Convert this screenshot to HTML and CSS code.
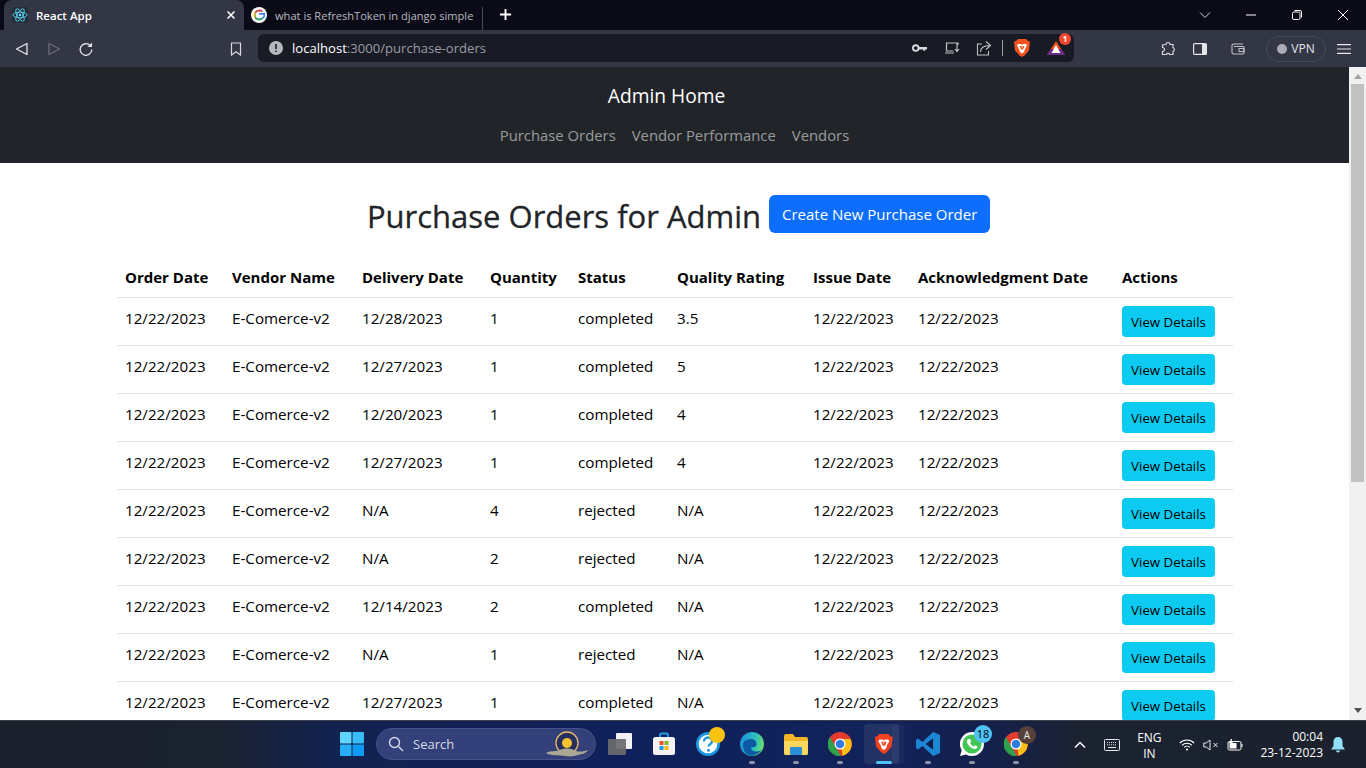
FILE: index.html
```html
<!DOCTYPE html>
<html lang="en">
<head>
<meta charset="utf-8">
<title>React App</title>
<link rel="stylesheet" href="styles.css">
</head>
<body>
<header class="browser">
  <div class="tabstrip">
    <div class="tab active">
      <svg class="favicon" viewBox="0 0 16 16"><rect width="16" height="16" rx="2" fill="#20303a"/><g fill="none" stroke="#61dafb" stroke-width=".8"><ellipse cx="8" cy="8" rx="7" ry="2.8"/><ellipse cx="8" cy="8" rx="7" ry="2.8" transform="rotate(60 8 8)"/><ellipse cx="8" cy="8" rx="7" ry="2.8" transform="rotate(120 8 8)"/></g><circle cx="8" cy="8" r="1.3" fill="#61dafb"/></svg>
      <span class="tab-title">React App</span>
      <svg class="tab-x" viewBox="0 0 10 10"><path d="M1.5 1.5l7 7M8.5 1.5l-7 7" stroke="#fff" stroke-width="1.5"/></svg>
    </div>
    <div class="tab inactive">
      <svg class="favicon" viewBox="0 0 16 16"><circle cx="8" cy="8" r="8" fill="#fff"/><path d="M8 6.8h5.4c.3 2.900-1.700 5.600-5.200 5.600a4.400 4.400 0 0 1 0-8.800c1.200 0 2.200.4 3 1.100" fill="none" stroke="#4285f4" stroke-width="1.700"/><path d="M4.300 5.700a4.400 4.400 0 0 1 6.900-1" fill="none" stroke="#ea4335" stroke-width="1.700"/><path d="M4.200 5.500a4.400 4.400 0 0 0 0 5" fill="none" stroke="#fbbc05" stroke-width="1.700"/><path d="M4.200 10.300a4.400 4.400 0 0 0 6.800 1.100" fill="none" stroke="#34a853" stroke-width="1.700"/></svg>
      <span class="tab-title dim">what is RefreshToken in django simple</span>
    </div>
    <svg class="new-tab" viewBox="0 0 14 14"><path d="M7 1v12M1 7h12" stroke="#fff" stroke-width="2"/></svg>
    <div class="window-controls">
      <svg viewBox="0 0 12 12"><path d="M1 3.500l5 5 5-5" fill="none" stroke="#cfd0d4" stroke-width="1"/></svg>
      <svg viewBox="0 0 12 12"><path d="M1 6h10" stroke="#fff" stroke-width="1"/></svg>
      <svg viewBox="0 0 12 12"><rect x="1.500" y="3" width="7.500" height="7.500" rx="1.500" fill="none" stroke="#fff"/><path d="M3.500 1.500h5.500a1.500 1.500 0 0 1 1.500 1.500v5.500" fill="none" stroke="#fff"/></svg>
      <svg viewBox="0 0 12 12"><path d="M1 1l10 10M11 1l-10 10" stroke="#fff" stroke-width="1"/></svg>
    </div>
  </div>
  <div class="toolbar">
    <div class="nav-buttons">
      <svg viewBox="0 0 14 14"><path d="M12 1.500v11L1.500 7z" fill="none" stroke="#e4e5e8" stroke-width="1.300" stroke-linejoin="round"/></svg>
      <svg viewBox="0 0 14 14"><path d="M2 1.500v11L12.500 7z" fill="none" stroke="#6a6d78" stroke-width="1.300" stroke-linejoin="round"/></svg>
      <svg viewBox="0 0 14 14"><path d="M12.800 7.500a5.800 5.800 0 1 1-1.700-4.100" fill="none" stroke="#e4e5e8" stroke-width="1.300"/><path d="M13 .5v4.500H8.500z" fill="#e4e5e8"/></svg>
    </div>
    <svg class="bookmark" viewBox="0 0 12 14"><path d="M1.500 1h9v12L6 9.800 1.500 13z" fill="none" stroke="#d8d9dd" stroke-width="1.200"/></svg>
    <div class="omnibox">
      <svg class="info" viewBox="0 0 14 14"><circle cx="7" cy="7" r="7" fill="#b6b8bf"/><path d="M7 3v5M7 9.500v1.600" stroke="#1a1c26" stroke-width="1.600"/></svg>
      <span class="url"><span class="host">localhost</span>:3000/purchase-orders</span>
      <div class="omni-icons">
        <svg class="i-key" viewBox="0 0 16 10"><circle cx="4" cy="5" r="3" fill="none" stroke="#d8d9dd" stroke-width="2"/><path d="M7 4h9v2.500h-2V8h-2V6.500H7z" fill="#d8d9dd"/></svg>
        <svg class="i-install" viewBox="0 0 16 14"><path d="M9 2H2.500v8h7M1 12h9" fill="none" stroke="#c0c1c6" stroke-width="1.200"/><path d="M13 2v3M13 5v5M11 8l2 2.500L15 8" fill="none" stroke="#c0c1c6" stroke-width="1.200"/><path d="M9 2h5v2" fill="none" stroke="#c0c1c6" stroke-width="1.200"/></svg>
        <svg class="i-share" viewBox="0 0 16 16"><path d="M6 4H1.500v11h11v-4" fill="none" stroke="#c0c1c6" stroke-width="1.100"/><path d="M4.500 12c0-4 3-6.500 9-6.500M10 1.500l4.500 4-4.500 4" fill="none" stroke="#c0c1c6" stroke-width="1.100"/></svg>
        <span class="omni-sep"></span>
        <svg class="i-brave" viewBox="0 0 16 18"><path d="M4 0h8l2 2 2 .5-1 9-4.500 5L8 18l-2.500-1.500L1 11.500 0 2.500 2 2z" fill="#f1521f"/><path d="M4 5h3l1 1 1-1h3l1 1.500L11 10l-1 3-2 1.500L6 13 5 10 3 6.500z" fill="#fff"/><path d="M5.500 7h2L8 10l.5-3h2L9 10.500H7z" fill="#f1521f"/></svg>
        <span class="rewards">
          <svg viewBox="0 0 18 16"><path d="M9 1l9 14H0z" fill="#f1521f"/><path d="M0 15l4-6h10l4 6z" fill="#6b2b8c"/><path d="M9 5l4.500 8h-9z" fill="#fff"/></svg>
          <span class="badge">1</span>
        </span>
      </div>
    </div>
    <div class="toolbar-right">
      <svg class="i-ext" viewBox="0 0 16 16"><path d="M6 3.500a2 2 0 0 1 4 0h3v3a2.200 2.200 0 0 1 0 4v3H9.800a2 2 0 0 0-3.600 0H2.500v-3a2 2 0 0 0 0-4V4z" fill="none" stroke="#d8d9dd" stroke-width="1.200"/></svg>
      <svg class="i-side" viewBox="0 0 14 12"><rect x=".6" y=".6" width="12.800" height="10.800" rx="1" fill="none" stroke="#e4e5e8" stroke-width="1.200"/><rect x="9" y="1" width="4.500" height="10" fill="#e4e5e8"/></svg>
      <svg class="i-wallet" viewBox="0 0 14 12"><path d="M12 1H2.500A1.500 1.500 0 0 0 1 2.500v7A1.500 1.500 0 0 0 2.500 11h9a1.500 1.500 0 0 0 1.500-1.500v-5A1 1 0 0 0 12 3.500H3" fill="none" stroke="#c0c1c6" stroke-width="1.100"/><rect x="8" y="5.500" width="5" height="3" fill="none" stroke="#c0c1c6" stroke-width="1"/></svg>
      <div class="vpn"><span class="vpn-dot"></span>VPN</div>
      <svg class="i-menu" viewBox="0 0 14 10"><path d="M0 .6h14M0 5h14M0 9.400h14" stroke="#e4e5e8" stroke-width="1.200"/></svg>
    </div>
  </div>
</header>

<div class="viewport">
  <main class="page">
    <nav class="navbar">
      <a class="brand">Admin Home</a>
      <div class="nav-links"><a>Purchase Orders</a><a>Vendor Performance</a><a>Vendors</a></div>
    </nav>
    <section class="container">
      <div class="title-row">
        <h1>Purchase Orders for Admin</h1>
        <button class="btn-primary">Create New Purchase Order</button>
      </div>
      <table>
        <colgroup><col class="c1"><col class="c2"><col class="c3"><col class="c4"><col class="c5"><col class="c6"><col class="c7"><col class="c8"><col class="c9"></colgroup>
        <thead><tr><th>Order Date</th><th>Vendor Name</th><th>Delivery Date</th><th>Quantity</th><th>Status</th><th>Quality Rating</th><th>Issue Date</th><th>Acknowledgment Date</th><th>Actions</th></tr></thead>
        <tbody>
          <tr><td>12/22/2023</td><td>E-Comerce-v2</td><td>12/28/2023</td><td>1</td><td>completed</td><td>3.5</td><td>12/22/2023</td><td>12/22/2023</td><td><button class="btn-info">View Details</button></td></tr>
          <tr><td>12/22/2023</td><td>E-Comerce-v2</td><td>12/27/2023</td><td>1</td><td>completed</td><td>5</td><td>12/22/2023</td><td>12/22/2023</td><td><button class="btn-info">View Details</button></td></tr>
          <tr><td>12/22/2023</td><td>E-Comerce-v2</td><td>12/20/2023</td><td>1</td><td>completed</td><td>4</td><td>12/22/2023</td><td>12/22/2023</td><td><button class="btn-info">View Details</button></td></tr>
          <tr><td>12/22/2023</td><td>E-Comerce-v2</td><td>12/27/2023</td><td>1</td><td>completed</td><td>4</td><td>12/22/2023</td><td>12/22/2023</td><td><button class="btn-info">View Details</button></td></tr>
          <tr><td>12/22/2023</td><td>E-Comerce-v2</td><td>N/A</td><td>4</td><td>rejected</td><td>N/A</td><td>12/22/2023</td><td>12/22/2023</td><td><button class="btn-info">View Details</button></td></tr>
          <tr><td>12/22/2023</td><td>E-Comerce-v2</td><td>N/A</td><td>2</td><td>rejected</td><td>N/A</td><td>12/22/2023</td><td>12/22/2023</td><td><button class="btn-info">View Details</button></td></tr>
          <tr><td>12/22/2023</td><td>E-Comerce-v2</td><td>12/14/2023</td><td>2</td><td>completed</td><td>N/A</td><td>12/22/2023</td><td>12/22/2023</td><td><button class="btn-info">View Details</button></td></tr>
          <tr><td>12/22/2023</td><td>E-Comerce-v2</td><td>N/A</td><td>1</td><td>rejected</td><td>N/A</td><td>12/22/2023</td><td>12/22/2023</td><td><button class="btn-info">View Details</button></td></tr>
          <tr><td>12/22/2023</td><td>E-Comerce-v2</td><td>12/27/2023</td><td>1</td><td>completed</td><td>N/A</td><td>12/22/2023</td><td>12/22/2023</td><td><button class="btn-info">View Details</button></td></tr>
        </tbody>
      </table>
    </section>
  </main>
  <aside class="scrollbar">
    <svg class="arrow" viewBox="0 0 8 5"><path d="M4 0l4 5H0z" fill="#a3a3a3"/></svg>
    <div class="thumb"></div>
    <svg class="arrow arrow-down" viewBox="0 0 8 5"><path d="M0 0h8L4 5z" fill="#505050"/></svg>
  </aside>
</div>

<footer class="taskbar">
  <div class="task-center">
    <svg class="win" viewBox="0 0 24 24"><rect width="11.500" height="11.500" rx="1" fill="#5fd4fb"/><rect x="12.500" width="11.500" height="11.500" rx="1" fill="#37bdf8"/><rect y="12.500" width="11.500" height="11.500" rx="1" fill="#27aef5"/><rect x="12.500" y="12.500" width="11.500" height="11.500" rx="1" fill="#0f9bf3"/></svg>
    <div class="search">
      <svg class="search-glass" viewBox="0 0 16 16"><circle cx="6.500" cy="6.500" r="5" fill="none" stroke="#d6dae8" stroke-width="1.400"/><path d="M10.500 10.500l4.500 4.500" stroke="#d6dae8" stroke-width="1.400"/></svg>
      <span>Search</span>
      <svg class="search-art" viewBox="0 0 44 28"><circle cx="22" cy="12" r="11" fill="#26305f" stroke="#e8b768" stroke-width="1.300"/><circle cx="22" cy="12" r="5" fill="#f9c22e"/><path d="M1 22c6-3 10-1 14-3s10-2 14 0 8 2 14 0c-2 4-7 4-10 5s-8 2-13 1-15 0-19-3z" fill="#a9a894"/></svg>
    </div>
    <svg class="app" viewBox="0 0 24 24"><rect x="8" y="1" width="16" height="16" rx="1" fill="#f2f2f4"/><rect y="7" width="18" height="16" rx="1" fill="#6b6b6f" opacity=".93"/></svg>
    <svg class="app" viewBox="0 0 24 24"><path d="M8 6V3a1.500 1.500 0 0 1 1.500-1.500h5A1.500 1.500 0 0 1 16 3v3" fill="none" stroke="#2a9fe8" stroke-width="1.800"/><rect x="1" y="5" width="22" height="18" rx="2.500" fill="#f4f4f6"/><rect x="7.500" y="9" width="4" height="4" fill="#e8532c"/><rect x="12.500" y="9" width="4" height="4" fill="#7fba2e"/><rect x="7.500" y="14" width="4" height="4" fill="#1f9ce8"/><rect x="12.500" y="14" width="4" height="4" fill="#f9b81c"/></svg>
    <span class="app-wrap">
      <svg class="app" viewBox="0 0 24 24"><circle cx="12" cy="12" r="12" fill="#1c97e0"/><circle cx="12" cy="12" r="9.300" fill="#fff"/><path d="M8 9.500a4 4 0 0 1 8 0c0 2.500-3.500 2.800-3.500 5" fill="none" stroke="#1c97e0" stroke-width="2.400"/><circle cx="12.500" cy="18.300" r="1.500" fill="#1c97e0"/></svg>
      <span class="dot-yellow"></span>
    </span>
    <span class="app-wrap">
      <svg class="app" viewBox="0 0 24 24"><defs><linearGradient id="eg" x1="0" y1=".3" x2="1" y2=".5"><stop offset="0" stop-color="#1a8fdc"/><stop offset=".6" stop-color="#2cc0c0"/><stop offset="1" stop-color="#6ae06a"/></linearGradient></defs><circle cx="12" cy="12" r="12" fill="url(#eg)"/><path d="M3 13c0-4 4-6 8-6 4 0 6 3 5.500 6-.5 2-3 2.500-5 2-1 2 1 4 4 4.500 2 .3 4-.2 6-1.500-2 3-6 5.500-10 5.500-6 0-8.500-5.500-8.500-10.500z" fill="#0c59a4"/></svg>
      <span class="pip"></span>
    </span>
    <span class="app-wrap">
      <svg class="app" viewBox="0 0 24 24"><path d="M0 4a2 2 0 0 1 2-2h7l2 3h11a2 2 0 0 1 2 2v14a2 2 0 0 1-2 2H2a2 2 0 0 1-2-2z" fill="#f0b429"/><path d="M0 9h24v12a2 2 0 0 1-2 2H2a2 2 0 0 1-2-2z" fill="#fcd75e"/><rect x="6" y="15" width="12" height="8" rx="1" fill="#2a8fd8"/></svg>
      <span class="pip"></span>
    </span>
    <span class="app-wrap">
      <svg class="app" viewBox="0 0 24 24"><circle cx="12" cy="12" r="12" fill="#e33b2e"/><path d="M12 7h10.500a12 12 0 0 1-8 16.700z" fill="#fbc116"/><path d="M2 5l5.500 10 5.500 9A12 12 0 0 1 2 5z" fill="#2fa04d"/><circle cx="12" cy="12" r="5.500" fill="#fff"/><circle cx="12" cy="12" r="4.300" fill="#2f7de1"/></svg>
      <span class="pip"></span>
    </span>
    <span class="app-wrap brave-active">
      <svg class="brave-task" viewBox="0 0 16 18"><path d="M4 0h8l2 2 2 .5-1 9-4.500 5L8 18l-2.500-1.500L1 11.500 0 2.500 2 2z" fill="#f1421f"/><path d="M4 5h3l1 1 1-1h3l1 1.500L11 10l-1 3-2 1.500L6 13 5 10 3 6.500z" fill="#fff"/><path d="M5.500 7h2L8 10l.5-3h2L9 10.500H7z" fill="#f1421f"/></svg>
      <span class="pip-active"></span>
    </span>
    <span class="app-wrap">
      <svg class="app" viewBox="0 0 24 24"><path d="M17 0l7 3v18l-7 3L6.500 14 2 17.500 0 16v-8l2-1.500L6.500 10z" fill="#1b87d4"/><path d="M17 6.500v11L9.500 12z" fill="#0f1e4a"/></svg>
      <span class="pip"></span>
    </span>
    <span class="app-wrap">
      <svg class="app" viewBox="0 0 24 24"><path d="M12 0a12 12 0 0 1 0 24c-2 0-4-.5-6-1.500L0 24l1.700-5.800A12 12 0 0 1 12 0z" fill="#fff"/><circle cx="12" cy="12" r="9.500" fill="#43c554"/><path d="M8 7c-1.500 1-1.500 3 0 5.500 2 3 5 4.500 7 4.500 1.500 0 2.500-1 2.500-2.500l-2.500-1.300-1.200 1.200c-1.500-.5-3-2-3.700-3.700l1.200-1.200L10 7z" fill="#fff"/></svg>
      <span class="count">18</span>
      <span class="pip"></span>
    </span>
    <span class="app-wrap">
      <svg class="app" viewBox="0 0 24 24"><circle cx="12" cy="12" r="12" fill="#e33b2e"/><path d="M12 7h10.500a12 12 0 0 1-8 16.700z" fill="#fbc116"/><path d="M2 5l5.500 10 5.500 9A12 12 0 0 1 2 5z" fill="#2fa04d"/><circle cx="12" cy="12" r="5.500" fill="#fff"/><circle cx="12" cy="12" r="4.300" fill="#2f7de1"/></svg>
      <span class="avatar">A</span>
      <span class="pip"></span>
    </span>
  </div>
  <div class="tray">
    <svg class="t-up" viewBox="0 0 12 8"><path d="M1 6.500l5-5 5 5" fill="none" stroke="#fff" stroke-width="1.500"/></svg>
    <svg class="t-kbd" viewBox="0 0 16 12"><rect x=".5" y=".5" width="15" height="11" rx="1" fill="none" stroke="#e8e9ec"/><path d="M3 3.500h10M3 5.800h10" stroke="#e8e9ec" stroke-dasharray="1 1"/><path d="M4 8.500h8" stroke="#e8e9ec"/></svg>
    <div class="lang"><span>ENG</span><span>IN</span></div>
    <svg class="t-wifi" viewBox="0 0 16 12"><path d="M.8 4a10 10 0 0 1 14.400 0M3 6.300a7 7 0 0 1 10 0M5.200 8.400a4 4 0 0 1 5.600 0" fill="none" stroke="#fff" stroke-width="1.100"/><circle cx="8" cy="10.500" r="1.100" fill="#fff"/></svg>
    <svg class="t-vol" viewBox="0 0 16 12"><path d="M.8 4v4h2.500L7 11V1L3.300 4z" fill="none" stroke="#e8e9ec"/><path d="M10.500 4l4 4M14.500 4l-4 4" stroke="#e8e9ec"/></svg>
    <svg class="t-bat" viewBox="0 0 16 12"><rect x="1" y="2.500" width="13" height="8.500" rx="1.500" fill="none" stroke="#fff"/><rect x="2.500" y="4" width="7" height="5.500" fill="#fff"/><path d="M14.500 5h1v3h-1zM4 0L2 4h2L3 7l3-4H4.500L5 0z" fill="#fff"/></svg>
    <div class="clock"><span>00:04</span><span>23-12-2023</span></div>
    <svg class="t-bell" viewBox="0 0 14 16"><path d="M7 0a4.500 4.500 0 0 1 4.500 4.500V9L14 12.500H0L2.500 9V4.500A4.500 4.500 0 0 1 7 0z" fill="#8fe0f8"/><path d="M5 13.500h4a2 2 0 0 1-4 0z" fill="#8fe0f8"/></svg>
  </div>
</footer>
</body>
</html>
```
FILE: styles.css
```css
* { box-sizing: border-box; }
html, body { margin: 0; height: 100%; overflow: hidden; }
body {
  display: flex;
  flex-direction: column;
  height: 768px;
  font-family: "Open Sans", "Noto Sans", sans-serif;
  color: #212529;
  background: #fff;
}
svg { display: block; flex: none; }

/* browser chrome */
.browser { flex: none; }
.tabstrip {
  height: 30px;
  background: #0a0b16;
  display: flex;
  align-items: flex-end;
  padding-left: 4px;
}
.tab { height: 30px; display: flex; align-items: center; font-size: 11.500px; }
.tab.active {
  width: 240px;
  background: #323645;
  border-radius: 8px 8px 0 0;
  padding: 0 0 0 8px;
  color: #fff;
  font-weight: 600;
}
.favicon { width: 16px; height: 16px; }
.tab-title { margin-left: 8px; white-space: nowrap; }
.tab.active .tab-title { flex: 1; }
.tab-x { width: 10px; height: 10px; margin-right: 8px; }
.tab.inactive {
  width: 239px;
  padding-left: 7px;
  position: relative;
}
.tab.inactive::after {
  content: "";
  position: absolute;
  right: 0;
  top: 7px;
  height: 23px;
  width: 1px;
  background: #4a4c58;
}
.tab-title.dim {
  color: #b9bac0;
  font-size: 11.100px;
}
.new-tab { width: 13px; height: 13px; margin: 0 0 9px 16px; }
.window-controls {
  margin-left: auto;
  height: 30px;
  display: flex;
  align-items: center;
  gap: 34px;
  padding-right: 17px;
}
.window-controls svg { width: 12px; height: 12px; }
.toolbar {
  height: 37px;
  background: #323645;
  display: flex;
  align-items: center;
  padding-left: 15px;
}
.nav-buttons { display: flex; gap: 18px; width: 215px; }
.nav-buttons svg { width: 14px; height: 14px; }
.bookmark { width: 12px; height: 14px; margin-right: 16px; }
.omnibox {
  width: 816px;
  height: 28px;
  background: #181a24;
  border-radius: 6px;
  display: flex;
  align-items: center;
  padding-left: 11px;
  margin-bottom: 1px;
}
.info { width: 14px; height: 14px; }
.url { margin-left: 9px; font-size: 13.100px; color: #9b9da5; }
.host { color: #fff; }
.omni-icons { margin-left: auto; display: flex; align-items: center; padding-right: 8px; }
.i-key { width: 15px; height: 10px; margin-right: 17px; }
.i-install { width: 16px; height: 14px; margin-right: 16px; }
.i-share { width: 16px; height: 16px; margin-right: 10px; }
.omni-sep { width: 1px; height: 16px; background: #9a9ca4; margin-right: 11px; }
.i-brave { width: 16px; height: 18px; margin-right: 17px; }
.rewards { position: relative; display: block; width: 19px; height: 16px; }
.rewards svg { width: 18px; height: 16px; }
.badge {
  position: absolute;
  top: -7px;
  right: -5px;
  width: 12px;
  height: 12px;
  border-radius: 50%;
  background: #f1472c;
  color: #fff;
  font-size: 8px;
  line-height: 12px;
  text-align: center;
  font-weight: 700;
}
.toolbar-right { display: flex; align-items: center; margin-left: 86px; }
.i-ext { width: 16px; height: 16px; margin-right: 17px; }
.i-side { width: 14px; height: 12px; margin-right: 24px; }
.i-wallet { width: 14px; height: 12px; margin-right: 21px; }
.vpn {
  width: 60px;
  height: 26px;
  border: 1px solid #464a5a;
  border-radius: 13px;
  display: flex;
  align-items: center;
  justify-content: center;
  gap: 4px;
  font-size: 12px;
  color: #e4e5e8;
  margin-right: 11px;
}
.vpn-dot { width: 10px; height: 10px; border-radius: 50%; background: #a9abb5; }
.i-menu { width: 14px; height: 10px; }

/* page */
.viewport { flex: 1; min-height: 0; display: flex; }
.page { flex: 1; min-width: 0; overflow: hidden; }
.navbar {
  height: 96px;
  background: #212529;
  display: flex;
  flex-direction: column;
  align-items: center;
  padding-top: 14px;
}
.brand { font-size: 19.200px; color: #fff; line-height: 30px; margin-right: 16px; }
.nav-links { display: flex; gap: 16px; margin-top: 12px; font-size: 14.850px; line-height: 24px; color: rgba(255,255,255,.55); }
.container { width: 1116px; margin-left: 117px; }
.title-row {
  height: 95px;
  display: flex;
  justify-content: center;
  align-items: flex-start;
  gap: 8px;
  padding: 32px 0 0 7px;
}
h1 { margin: 0; font-size: 31px; font-weight: 500; line-height: 42px; -webkit-text-stroke: .3px #212529; }
.btn-primary {
  width: 221px;
  height: 38px;
  background: #0d6efd;
  color: #fff;
  border: 0;
  border-radius: 6px;
  font: inherit;
  font-size: 15px;
}
table { width: 1116px; table-layout: fixed; border-collapse: collapse; color: #000; font-size: 15.200px; }
.c1 { width: 107px; } .c2 { width: 130px; } .c3 { width: 128px; }
.c4 { width: 88px; } .c5 { width: 99px; } .c6 { width: 136px; }
.c7 { width: 105px; } .c8 { width: 204px; } .c9 { width: 119px; }
th, td { padding: 8px; text-align: left; vertical-align: top; white-space: nowrap; border-bottom: 1px solid #dee2e6; }
th { font-weight: 700; height: 39px; line-height: 23px; font-size: 15px; }
td { height: 48px; line-height: 24px; }
.btn-info {
  display: block;
  width: 93px;
  height: 31px;
  background: #0dcaf0;
  color: #000;
  border: 0;
  border-radius: 4px;
  padding: 0;
  font: inherit;
  font-size: 13.300px;
}
.scrollbar { width: 17px; flex: none; background: #f1f1f1; padding: 0 2px; display: flex; flex-direction: column; }
.arrow { width: 8px; height: 5px; margin: 7px auto 5px; }
.thumb { height: 398px; background: #c1c1c1; }
.arrow-down { margin: auto auto 7px; }

/* taskbar */
.taskbar {
  height: 48px;
  flex: none;
  display: flex;
  align-items: center;
  background: linear-gradient(90deg, #1b222d 0%, #1b2230 16%, #13234f 24%, #10205a 45%, #12225a 65%, #15214a 73%, #1b2231 79%, #1b222d 100%);
  border-top: 1px solid #3a3f4a;
  position: relative;
}
.task-center { display: flex; align-items: center; margin-left: 340px; height: 47px; padding-bottom: 1px; }
.win { width: 24px; height: 24px; margin-right: 12px; }
.search {
  width: 220px;
  height: 32px;
  border-radius: 16px;
  background: #33407a;
  border: 1px solid #46538a;
  display: flex;
  align-items: center;
  padding-left: 11px;
  font-size: 13px;
  color: #d6dae8;
  position: relative;
  margin-right: 12px;
}
.search span { margin-left: 9px; }
.search-glass { width: 16px; height: 16px; }
.search-art { position: absolute; right: 6px; top: 2px; width: 44px; height: 28px; }
.app { width: 24px; height: 24px; }
.task-center > .app { margin-right: 20px; }
.app-wrap { position: relative; display: flex; align-items: center; justify-content: center; width: 24px; height: 24px; margin-right: 20px; }
.dot-yellow { position: absolute; width: 16px; height: 16px; border-radius: 50%; background: #f9c30f; top: -5px; right: -5px; }
.pip { position: absolute; bottom: -8px; left: 9px; width: 6px; height: 3px; border-radius: 2px; background: #8d93a5; }
.brave-active::before { content: ""; position: absolute; left: -8px; top: -8px; width: 35px; height: 40px; background: rgba(255,255,255,.08); border-radius: 4px; }
.brave-active::after { content: ""; position: absolute; left: 20px; top: -8px; width: 12px; height: 40px; background: rgba(255,255,255,.04); border-radius: 4px; }
.brave-task { width: 17.700px; height: 20px; position: relative; }
.pip-active { position: absolute; bottom: -8px; left: 4px; width: 16px; height: 3px; border-radius: 2px; background: #4fc3f7; }
.count { position: absolute; top: -7px; right: -8px; width: 18px; height: 18px; border-radius: 50%; background: #4fc3f7; color: #000; font-size: 11px; line-height: 18px; text-align: center; }
.avatar { position: absolute; top: -6px; right: -8px; width: 18px; height: 18px; border-radius: 50%; background: #56403a; color: #e8e8e8; font-size: 10px; line-height: 18px; text-align: center; }
.tray { margin-left: auto; display: flex; align-items: center; color: #fff; font-size: 12px; padding: 0 21px 0 0; }
.t-up { width: 12px; height: 8px; margin-right: 18px; }
.t-kbd { width: 16px; height: 12px; margin-right: 17px; }
.lang { width: 24px; display: flex; flex-direction: column; align-items: center; line-height: 16px; margin: 2px 18px 0 0; }
.t-wifi { width: 16px; height: 12px; margin-right: 8px; }
.t-vol { width: 16px; height: 12px; margin-right: 8px; }
.t-bat { width: 16px; height: 12px; margin-right: 17px; }
.clock { display: flex; flex-direction: column; align-items: flex-end; line-height: 16px; margin-right: 8px; }
.t-bell { width: 14px; height: 16px; }
```
